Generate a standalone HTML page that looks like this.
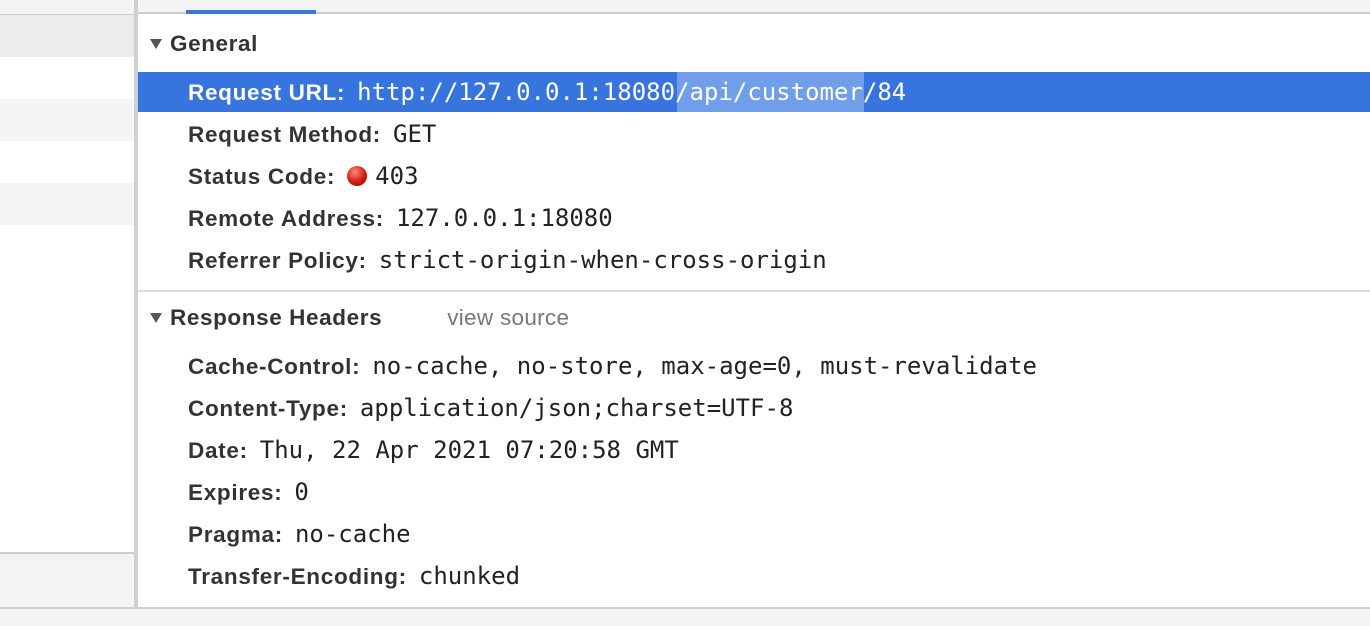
<!DOCTYPE html>
<html><head><meta charset="utf-8"><style>
*{margin:0;padding:0;box-sizing:border-box}
body{width:1370px;height:626px;overflow:hidden;background:#fff;position:relative;font-family:"Liberation Sans",Arial,sans-serif}
.a{position:absolute}
.lbl{position:absolute;left:188px;font-weight:bold;font-size:22.5px;letter-spacing:0.7px;color:#333;white-space:nowrap;line-height:42px;height:42px}
.lbl span{font-family:"DejaVu Sans Mono","Liberation Mono",monospace;font-weight:normal;font-size:24px;letter-spacing:0;color:#222;margin-left:12px}
.hd{position:absolute;left:150px;font-weight:bold;font-size:22.5px;letter-spacing:0.6px;color:#333;line-height:42px}
.tri{display:inline-block;width:0;height:0;border-left:6px solid transparent;border-right:6px solid transparent;border-top:10px solid #555;margin-right:8px;vertical-align:2px}
</style></head><body>
<div class="a" style="left:0;top:0;width:134px;height:14px;background:#f3f3f3"></div>
<div class="a" style="left:0;top:14px;width:134px;height:1px;background:#ccc"></div>
<div class="a" style="left:0;top:15px;width:134px;height:42px;background:#ececec"></div>
<div class="a" style="left:0;top:99px;width:134px;height:42px;background:#f5f5f5"></div>
<div class="a" style="left:0;top:183px;width:134px;height:42px;background:#f5f5f5"></div>
<div class="a" style="left:0;top:552px;width:134px;height:2px;background:#ccc"></div>
<div class="a" style="left:0;top:554px;width:134px;height:53px;background:#f3f3f3"></div>
<div class="a" style="left:134px;top:0;width:4px;height:607px;background:#d0d0d0"></div>
<div class="a" style="left:138px;top:0;width:1232px;height:12px;background:#f3f3f3"></div>
<div class="a" style="left:138px;top:12px;width:1232px;height:2px;background:#ccc"></div>
<div class="a" style="left:186px;top:10px;width:130px;height:4px;background:#3c78d8"></div>
<div class="a" style="left:0;top:607px;width:1370px;height:19px;background:#f3f3f3;border-top:2px solid #d0d0d0"></div>

<div class="hd" style="top:23px"><span class="tri"></span>General</div>
<div class="a" style="left:138px;top:72px;width:1232px;height:40px;background:#3874dd"></div>
<div class="a" style="left:677px;top:72px;width:187px;height:40px;background:#709ee8"></div>
<div class="lbl" style="top:71px;color:#fff">Request URL:<span style="color:#fff">http://127.0.0.1:18080/api/customer/84</span></div>
<div class="lbl" style="top:113px">Request Method:<span>GET</span></div>
<div class="lbl" style="top:155px">Status Code:<span style="display:inline-block;width:20px;height:20px;border-radius:50%;background:radial-gradient(circle at 40% 30%,#ff8a7a,#d01a10 55%,#900);vertical-align:-2px;margin-left:12px"></span><span style="margin-left:8px">403</span></div>
<div class="lbl" style="top:197px">Remote Address:<span>127.0.0.1:18080</span></div>
<div class="lbl" style="top:239px">Referrer Policy:<span>strict-origin-when-cross-origin</span></div>
<div class="a" style="left:138px;top:290px;width:1232px;height:2px;background:#ddd"></div>
<div class="hd" style="top:297px"><span class="tri"></span>Response Headers<span style="font-weight:normal;color:#777;margin-left:65px;letter-spacing:0.3px">view source</span></div>
<div class="lbl" style="top:345px">Cache-Control:<span>no-cache, no-store, max-age=0, must-revalidate</span></div>
<div class="lbl" style="top:387px">Content-Type:<span>application/json;charset=UTF-8</span></div>
<div class="lbl" style="top:429px">Date:<span>Thu, 22 Apr 2021 07:20:58 GMT</span></div>
<div class="lbl" style="top:471px">Expires:<span>0</span></div>
<div class="lbl" style="top:513px">Pragma:<span>no-cache</span></div>
<div class="lbl" style="top:555px">Transfer-Encoding:<span>chunked</span></div>
</body></html>
